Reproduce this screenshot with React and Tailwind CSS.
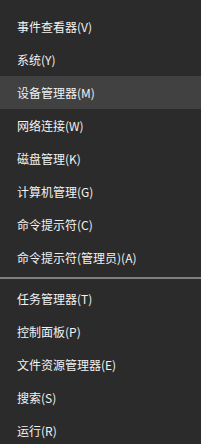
const groups = [
  [
    "事件查看器(V)",
    "系统(Y)",
    "设备管理器(M)",
    "网络连接(W)",
    "磁盘管理(K)",
    "计算机管理(G)",
    "命令提示符(C)",
    "命令提示符(管理员)(A)",
  ],
  ["任务管理器(T)", "控制面板(P)", "文件资源管理器(E)", "搜索(S)", "运行(R)"],
];

export default function App() {
  return (
    <div
      className="w-[201px] h-[444px] overflow-hidden bg-[#2b2b2b] pt-[10px] text-[12px] text-[#f2f2f2]"
      style={{ fontFamily: '"Microsoft YaHei", "Noto Sans CJK SC", sans-serif' }}
    >
      {groups.map((items, gi) => (
        <div key={gi}>
          {gi > 0 && <div className="my-[3px] h-[2px] bg-[#7f7f7f]" />}
          {items.map((label) => (
            <div
              key={label}
              className={
                "flex h-[33px] items-center pl-[17px] " +
                (label === "设备管理器(M)" ? "bg-[#414141]" : "")
              }
            >
              {label}
            </div>
          ))}
        </div>
      ))}
    </div>
  );
}
